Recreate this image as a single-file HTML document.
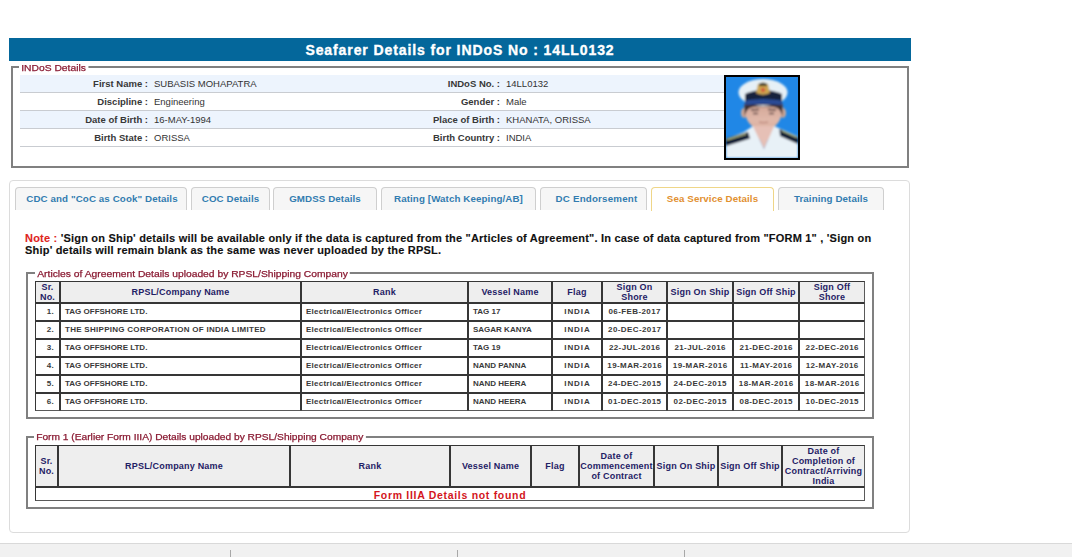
<!DOCTYPE html>
<html><head><meta charset="utf-8">
<style>
*{box-sizing:border-box;margin:0;padding:0}
html,body{width:1072px;height:557px;overflow:hidden;background:#fff;font-family:"Liberation Sans",sans-serif;position:relative}
.abs{position:absolute}
#title{left:9px;top:38px;width:902px;height:23px;background:#04679b;color:#fff;font-weight:bold;font-size:14px;line-height:23px;padding-top:1px;text-align:center;letter-spacing:0.9px;-webkit-text-stroke:0.35px #fff}
.fs{position:absolute;border:2px solid #808080}
.legend{position:absolute;background:#fff;color:#8a1b33;font-size:9.2px;line-height:12px;padding:0 2px;white-space:nowrap;-webkit-text-stroke:0.25px #8a1b33;transform-origin:0 0;transform:scaleX(1.12)}
.row{position:absolute;left:20px;width:704px;height:18px;border-bottom:1px solid #c9ccd1;font-size:9.5px;color:#333;line-height:17px}
.row.b{background:#edf4fd}
.row span{position:absolute;white-space:nowrap}
.lab{font-weight:bold;color:#383838;text-align:right}
#panel{left:9px;top:180px;width:901px;height:353px;border:1px solid #dcdcdc;border-radius:4px}
.tab{position:absolute;top:187px;height:23px;border:1px solid #cfcfcf;border-bottom:none;border-radius:4px 4px 0 0;background:#f6f6f6;color:#327cb0;font-weight:bold;font-size:9.75px;line-height:22px;text-align:center;white-space:nowrap;letter-spacing:0.1px}
.tab.act{background:#fff;border-color:#efd688;color:#e2902f;height:24px}
#note{left:25px;top:232px;width:860px;font-size:11px;font-weight:bold;line-height:12px;color:#111;letter-spacing:0.2px;-webkit-text-stroke:0.12px #111}
#note .r{-webkit-text-stroke:0.12px #d9261e}
#note .r{color:#e0241b}
table{position:absolute;border-collapse:separate;border-spacing:0;table-layout:fixed}
td,th{border:1px solid #363636;overflow:hidden;white-space:nowrap}
th{background:#eeeeee;color:#1f2165;font-size:9px;font-weight:bold;line-height:10px;text-align:center;padding:0;letter-spacing:0.2px}
td{font-size:8px;font-weight:bold;color:#3a3a3a;height:18px;padding:0 0 2px 4px;letter-spacing:0.25px}
td.c{text-align:center;padding:0 0 2px 0}
tr:last-child td{border-bottom-color:#5a5a5a}
td:last-child,th:last-child{border-right-color:#5a5a5a}
td.n{letter-spacing:0}
td.s{letter-spacing:0.28px}
td.k{letter-spacing:0.24px}
td.f{letter-spacing:0.9px;text-indent:0.9px}
td.d{letter-spacing:0.4px;text-indent:0.4px}
td.sr{text-align:right;padding:0 5px 2px 0}
</style></head><body>

<div id="title" class="abs">Seafarer Details for INDoS No : 14LL0132</div>

<!-- INDoS fieldset -->
<div class="fs" style="left:11px;top:66px;width:898px;height:102px"></div>
<div class="legend" style="left:19px;top:62px">INDoS Details</div>

<div class="row b" style="top:75px"><span class="lab" style="right:576px">First Name :</span><span style="left:134px">SUBASIS MOHAPATRA</span><span class="lab" style="right:224px">INDoS No. :</span><span style="left:486px">14LL0132</span></div>
<div class="row" style="top:93px"><span class="lab" style="right:576px">Discipline :</span><span style="left:134px">Engineering</span><span class="lab" style="right:224px">Gender :</span><span style="left:486px">Male</span></div>
<div class="row b" style="top:111px"><span class="lab" style="right:576px">Date of Birth :</span><span style="left:134px">16-MAY-1994</span><span class="lab" style="right:224px">Place of Birth :</span><span style="left:486px">KHANATA, ORISSA</span></div>
<div class="row" style="top:129px"><span class="lab" style="right:576px">Birth State :</span><span style="left:134px">ORISSA</span><span class="lab" style="right:224px">Birth Country :</span><span style="left:486px">INDIA</span></div>

<div class="abs" id="photo" style="left:724px;top:75px;width:76px;height:85px;background:#000;padding:2px">
<svg width="72" height="81" viewBox="0 0 72 81" style="display:block">
<defs><filter id="bl" x="-10%" y="-10%" width="120%" height="120%"><feGaussianBlur stdDeviation="0.8"/></filter>
<linearGradient id="face" x1="0" y1="0" x2="0" y2="1"><stop offset="0" stop-color="#d2a696"/><stop offset="0.6" stop-color="#e0b8aa"/><stop offset="1" stop-color="#dcb09e"/></linearGradient></defs>
<rect width="72" height="81" fill="#2087e6"/>
<g filter="url(#bl)">
<ellipse cx="18" cy="36" rx="3" ry="5" fill="#cfa898"/>
<ellipse cx="57" cy="36" rx="3" ry="5" fill="#cfa898"/>
<path d="M27,46 L48,46 L47,62 L28,62 Z" fill="#e2b8aa"/>
<path d="M18.5,27 Q18,52 37.5,53 Q57,52 56.5,27 Z" fill="url(#face)"/>
<path d="M18.5,27 L56.5,27 L56.5,40 Q55,31 48,30 Q37,29 27,30 Q20,31 18.5,40 Z" fill="#3b2f33"/>
<path d="M25,33 L33,32.5 M42,32.5 L50,33" stroke="#4e3a3a" stroke-width="1.3"/>
<path d="M27,36.5 L32,36.5 M43,36.5 L48,36.5" stroke="#5e4444" stroke-width="1.3"/>
<path d="M33,45 Q37.5,46.5 42,45" stroke="#b27a70" stroke-width="1" fill="none"/>
<path d="M0,62 L18,55 L27,49 L38,72 L48,49 L56,52.5 L72,59.5 L72,81 L0,81 Z" fill="#e8f1f7"/>
<path d="M27,49 L48,49 L38,72 Z" fill="#e6c0b6"/>
<path d="M0,61.5 L22,55 L24,61.5 L0,69 Z" fill="#0d1b36"/>
<path d="M1,62.6 L20,57" stroke="#d2d68e" stroke-width="1.1"/>
<path d="M53.5,52 L72,60 L72,67 L54,59 Z" fill="#0d1b36"/>
<path d="M56,53.8 L71,60.6" stroke="#c4cc88" stroke-width="1.1"/>
<ellipse cx="37" cy="15.5" rx="24.5" ry="13.5" fill="#e6f0f6"/>
<path d="M19,17 Q37,9 56,17 L56,28 L19,28 Z" fill="#16223e"/>
<path d="M19,23.5 Q37,20.5 56,23.5 L55.5,28 Q37,26.5 19.5,28 Z" fill="#2a4c96"/>
<path d="M32,7 Q37,4 42,7 L44,16 Q37,19.5 30,16 Z" fill="#cda650"/>
<path d="M33,7 Q37,4.5 41,7 L41,9 L33,9 Z" fill="#3a3428"/>
<circle cx="37" cy="13" r="2.2" fill="#d25a3a"/>
</g>
</svg>
</div>

<!-- tabs panel -->
<div id="panel" class="abs"></div>
<div class="tab" style="left:15px;width:172px;padding-left:2px">CDC and "CoC as Cook" Details</div>
<div class="tab" style="left:191px;width:79px">COC Details</div>
<div class="tab" style="left:273px;width:104px">GMDSS Details</div>
<div class="tab" style="left:381px;width:155px">Rating [Watch Keeping/AB]</div>
<div class="tab" style="left:540px;width:107px;padding-left:6px;letter-spacing:0.2px">DC Endorsement</div>
<div class="tab act" style="left:651px;width:123px">Sea Service Details</div>
<div class="tab" style="left:778px;width:106px">Training Details</div>

<div id="note" class="abs"><span class="r">Note :</span> 'Sign on Ship' details will be available only if the data is captured from the "Articles of Agreement". In case of data captured from "FORM 1" , 'Sign on Ship' details will remain blank as the same was never uploaded by the RPSL.</div>

<!-- Articles fieldset -->
<div class="fs" style="left:26px;top:272px;width:848px;height:147px"></div>
<div class="legend" style="left:35px;top:268px">Articles of Agreement Details uploaded by RPSL/Shipping Company</div>

<table style="left:35px;top:281px;width:830px">
<colgroup><col style="width:25px"><col style="width:241px"><col style="width:167px"><col style="width:84px"><col style="width:50px"><col style="width:65px"><col style="width:66px"><col style="width:66px"><col style="width:66px"></colgroup>
<tr style="height:22px"><th>Sr.<br>No.</th><th>RPSL/Company Name</th><th>Rank</th><th>Vessel Name</th><th>Flag</th><th>Sign On<br>Shore</th><th>Sign On Ship</th><th>Sign Off Ship</th><th>Sign Off<br>Shore</th></tr>
<tr><td class="sr">1.</td><td class="n">TAG OFFSHORE LTD.</td><td class="k">Electrical/Electronics Officer</td><td class="n">TAG 17</td><td class="c f">INDIA</td><td class="c d">06-FEB-2017</td><td class="c d"></td><td class="c d"></td><td class="c d"></td></tr>
<tr><td class="sr">2.</td><td class="s">THE SHIPPING CORPORATION OF INDIA LIMITED</td><td class="k">Electrical/Electronics Officer</td><td class="n">SAGAR KANYA</td><td class="c f">INDIA</td><td class="c d">20-DEC-2017</td><td class="c d"></td><td class="c d"></td><td class="c d"></td></tr>
<tr><td class="sr">3.</td><td class="n">TAG OFFSHORE LTD.</td><td class="k">Electrical/Electronics Officer</td><td class="n">TAG 19</td><td class="c f">INDIA</td><td class="c d">22-JUL-2016</td><td class="c d">21-JUL-2016</td><td class="c d">21-DEC-2016</td><td class="c d">22-DEC-2016</td></tr>
<tr><td class="sr">4.</td><td class="n">TAG OFFSHORE LTD.</td><td class="k">Electrical/Electronics Officer</td><td class="n">NAND PANNA</td><td class="c f">INDIA</td><td class="c d">19-MAR-2016</td><td class="c d">19-MAR-2016</td><td class="c d">11-MAY-2016</td><td class="c d">12-MAY-2016</td></tr>
<tr><td class="sr">5.</td><td class="n">TAG OFFSHORE LTD.</td><td class="k">Electrical/Electronics Officer</td><td class="n">NAND HEERA</td><td class="c f">INDIA</td><td class="c d">24-DEC-2015</td><td class="c d">24-DEC-2015</td><td class="c d">18-MAR-2016</td><td class="c d">18-MAR-2016</td></tr>
<tr><td class="sr">6.</td><td class="n">TAG OFFSHORE LTD.</td><td class="k">Electrical/Electronics Officer</td><td class="n">NAND HEERA</td><td class="c f">INDIA</td><td class="c d">01-DEC-2015</td><td class="c d">02-DEC-2015</td><td class="c d">08-DEC-2015</td><td class="c d">10-DEC-2015</td></tr>
</table>

<!-- Form 1 fieldset -->
<div class="fs" style="left:26px;top:436px;width:848px;height:73px"></div>
<div class="legend" style="left:34px;top:431px;transform:scaleX(1.11)">Form 1 (Earlier Form IIIA) Details uploaded by RPSL/Shipping Company</div>

<table style="left:35px;top:445px;width:830px">
<colgroup><col style="width:23px"><col style="width:232px"><col style="width:160px"><col style="width:81px"><col style="width:48px"><col style="width:75px"><col style="width:64px"><col style="width:64px"><col style="width:83px"></colgroup>
<tr style="height:42px"><th>Sr.<br>No.</th><th>RPSL/Company Name</th><th>Rank</th><th>Vessel Name</th><th>Flag</th><th>Date of<br>Commencement<br>of Contract</th><th>Sign On Ship</th><th>Sign Off Ship</th><th>Date of<br>Completion of<br>Contract/Arriving<br>India</th></tr>
<tr><td colspan="9" class="c" style="height:14px;padding:2px 0 0 0;color:#d3151c;font-size:10.5px;line-height:10px;letter-spacing:0.7px">Form IIIA Details not found</td></tr>
</table>

<!-- bottom bar -->
<div class="abs" style="left:0;top:543px;width:1072px;height:14px;background:#f1f1f1;border-top:1px solid #d9d9d9"></div>
<div class="abs" style="left:230px;top:550px;width:1px;height:7px;background:#a8a8a8"></div>
<div class="abs" style="left:457px;top:550px;width:1px;height:7px;background:#a8a8a8"></div>
<div class="abs" style="left:684px;top:550px;width:1px;height:7px;background:#a8a8a8"></div>

</body></html>
